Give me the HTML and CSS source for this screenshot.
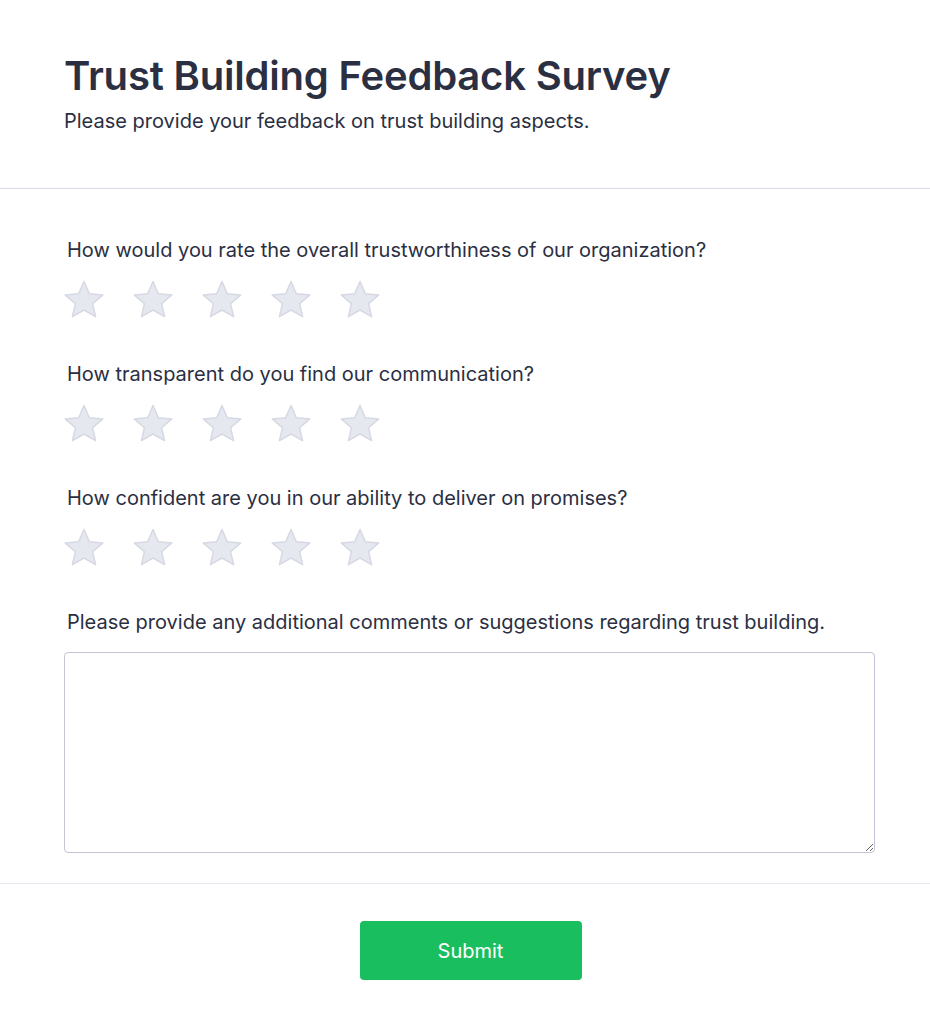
FILE: index.html
```html
<!DOCTYPE html>
<html lang="en">
<head>
<meta charset="utf-8">
<title>Trust Building Feedback Survey</title>
<link rel="stylesheet" href="styles.css">
</head>
<body>
<div class="survey">
  <header class="survey-header">
    <h1 class="title">Trust Building Feedback Survey</h1>
    <p class="subtitle">Please provide your feedback on trust building aspects.</p>
  </header>
  <main class="survey-body">
    <div class="question">
      <p class="label">How would you rate the overall trustworthiness of our organization?</p>
      <div class="stars">
        <svg class="star" viewBox="0 0 40 40"><path d="M20 1.5 L25.3 13.7 L38.8 14.9 L28.6 23.8 L31.6 36.7 L20 30 L8.4 36.7 L11.4 23.8 L1.2 14.9 L14.7 13.7 Z"/></svg>
        <svg class="star" viewBox="0 0 40 40"><path d="M20 1.5 L25.3 13.7 L38.8 14.9 L28.6 23.8 L31.6 36.7 L20 30 L8.4 36.7 L11.4 23.8 L1.2 14.9 L14.7 13.7 Z"/></svg>
        <svg class="star" viewBox="0 0 40 40"><path d="M20 1.5 L25.3 13.7 L38.8 14.9 L28.6 23.8 L31.6 36.7 L20 30 L8.4 36.7 L11.4 23.8 L1.2 14.9 L14.7 13.7 Z"/></svg>
        <svg class="star" viewBox="0 0 40 40"><path d="M20 1.5 L25.3 13.7 L38.8 14.9 L28.6 23.8 L31.6 36.7 L20 30 L8.4 36.7 L11.4 23.8 L1.2 14.9 L14.7 13.7 Z"/></svg>
        <svg class="star" viewBox="0 0 40 40"><path d="M20 1.5 L25.3 13.7 L38.8 14.9 L28.6 23.8 L31.6 36.7 L20 30 L8.4 36.7 L11.4 23.8 L1.2 14.9 L14.7 13.7 Z"/></svg>
      </div>
    </div>
    <div class="question">
      <p class="label">How transparent do you find our communication?</p>
      <div class="stars">
        <svg class="star" viewBox="0 0 40 40"><path d="M20 1.5 L25.3 13.7 L38.8 14.9 L28.6 23.8 L31.6 36.7 L20 30 L8.4 36.7 L11.4 23.8 L1.2 14.9 L14.7 13.7 Z"/></svg>
        <svg class="star" viewBox="0 0 40 40"><path d="M20 1.5 L25.3 13.7 L38.8 14.9 L28.6 23.8 L31.6 36.7 L20 30 L8.4 36.7 L11.4 23.8 L1.2 14.9 L14.7 13.7 Z"/></svg>
        <svg class="star" viewBox="0 0 40 40"><path d="M20 1.5 L25.3 13.7 L38.8 14.9 L28.6 23.8 L31.6 36.7 L20 30 L8.4 36.7 L11.4 23.8 L1.2 14.9 L14.7 13.7 Z"/></svg>
        <svg class="star" viewBox="0 0 40 40"><path d="M20 1.5 L25.3 13.7 L38.8 14.9 L28.6 23.8 L31.6 36.7 L20 30 L8.4 36.7 L11.4 23.8 L1.2 14.9 L14.7 13.7 Z"/></svg>
        <svg class="star" viewBox="0 0 40 40"><path d="M20 1.5 L25.3 13.7 L38.8 14.9 L28.6 23.8 L31.6 36.7 L20 30 L8.4 36.7 L11.4 23.8 L1.2 14.9 L14.7 13.7 Z"/></svg>
      </div>
    </div>
    <div class="question">
      <p class="label">How confident are you in our ability to deliver on promises?</p>
      <div class="stars">
        <svg class="star" viewBox="0 0 40 40"><path d="M20 1.5 L25.3 13.7 L38.8 14.9 L28.6 23.8 L31.6 36.7 L20 30 L8.4 36.7 L11.4 23.8 L1.2 14.9 L14.7 13.7 Z"/></svg>
        <svg class="star" viewBox="0 0 40 40"><path d="M20 1.5 L25.3 13.7 L38.8 14.9 L28.6 23.8 L31.6 36.7 L20 30 L8.4 36.7 L11.4 23.8 L1.2 14.9 L14.7 13.7 Z"/></svg>
        <svg class="star" viewBox="0 0 40 40"><path d="M20 1.5 L25.3 13.7 L38.8 14.9 L28.6 23.8 L31.6 36.7 L20 30 L8.4 36.7 L11.4 23.8 L1.2 14.9 L14.7 13.7 Z"/></svg>
        <svg class="star" viewBox="0 0 40 40"><path d="M20 1.5 L25.3 13.7 L38.8 14.9 L28.6 23.8 L31.6 36.7 L20 30 L8.4 36.7 L11.4 23.8 L1.2 14.9 L14.7 13.7 Z"/></svg>
        <svg class="star" viewBox="0 0 40 40"><path d="M20 1.5 L25.3 13.7 L38.8 14.9 L28.6 23.8 L31.6 36.7 L20 30 L8.4 36.7 L11.4 23.8 L1.2 14.9 L14.7 13.7 Z"/></svg>
      </div>
    </div>
    <div class="comment">
      <p class="label">Please provide any additional comments or suggestions regarding trust building.</p>
      <textarea class="comment-box"></textarea>
    </div>
  </main>
  <footer class="survey-footer">
    <button class="submit" type="button">Submit</button>
  </footer>
</div>
</body>
</html>
```

FILE: styles.css
```css
* { box-sizing: border-box; }
html, body {
  margin: 0;
  padding: 0;
  background: #ffffff;
}
body {
  font-family: Inter, "Noto Sans", "Liberation Sans", sans-serif;
  color: #2b2f42;
}
.survey {
  width: 930px;
}
.survey-header {
  padding: 52px 55px 53px 64px;
  border-bottom: 1px solid #d9dbe8;
}
.title {
  margin: 0;
  font-size: 40px;
  line-height: 48px;
  font-weight: 600;
  letter-spacing: -0.2px;
  color: #2b2f42;
}
.subtitle {
  margin: 7px 0 0 0;
  font-size: 20px;
  line-height: 28px;
  font-weight: 400;
  color: #2b2f42;
}
.survey-body {
  padding: 47px 55px 30px 64px;
  border-bottom: 1px solid #e5e7ee;
}
.question {
  margin-bottom: 40px;
}
.label {
  margin: 0 0 16px 3px;
  font-size: 20px;
  line-height: 28px;
  font-weight: 400;
  color: #2b2f42;
}
.stars {
  display: flex;
  gap: 29px;
  height: 40px;
}
.star {
  width: 40px;
  height: 40px;
  display: block;
}
.star path {
  fill: #e6e8f0;
  stroke: #d6d9e4;
  stroke-width: 1.5;
  stroke-linejoin: round;
}
.comment-box {
  display: block;
  width: 811px;
  height: 201px;
  border: 1px solid #c3c5d6;
  border-radius: 4px;
  resize: vertical;
  font-family: inherit;
  font-size: 16px;
  padding: 8px;
}
.survey-footer {
  display: flex;
  justify-content: center;
  padding: 37px 55px 50px 66px;
}
.submit {
  width: 222px;
  height: 59px;
  border: none;
  border-radius: 4px;
  background: #19bf5e;
  color: #ffffff;
  font-family: inherit;
  font-size: 20px;
  font-weight: 400;
}
```
